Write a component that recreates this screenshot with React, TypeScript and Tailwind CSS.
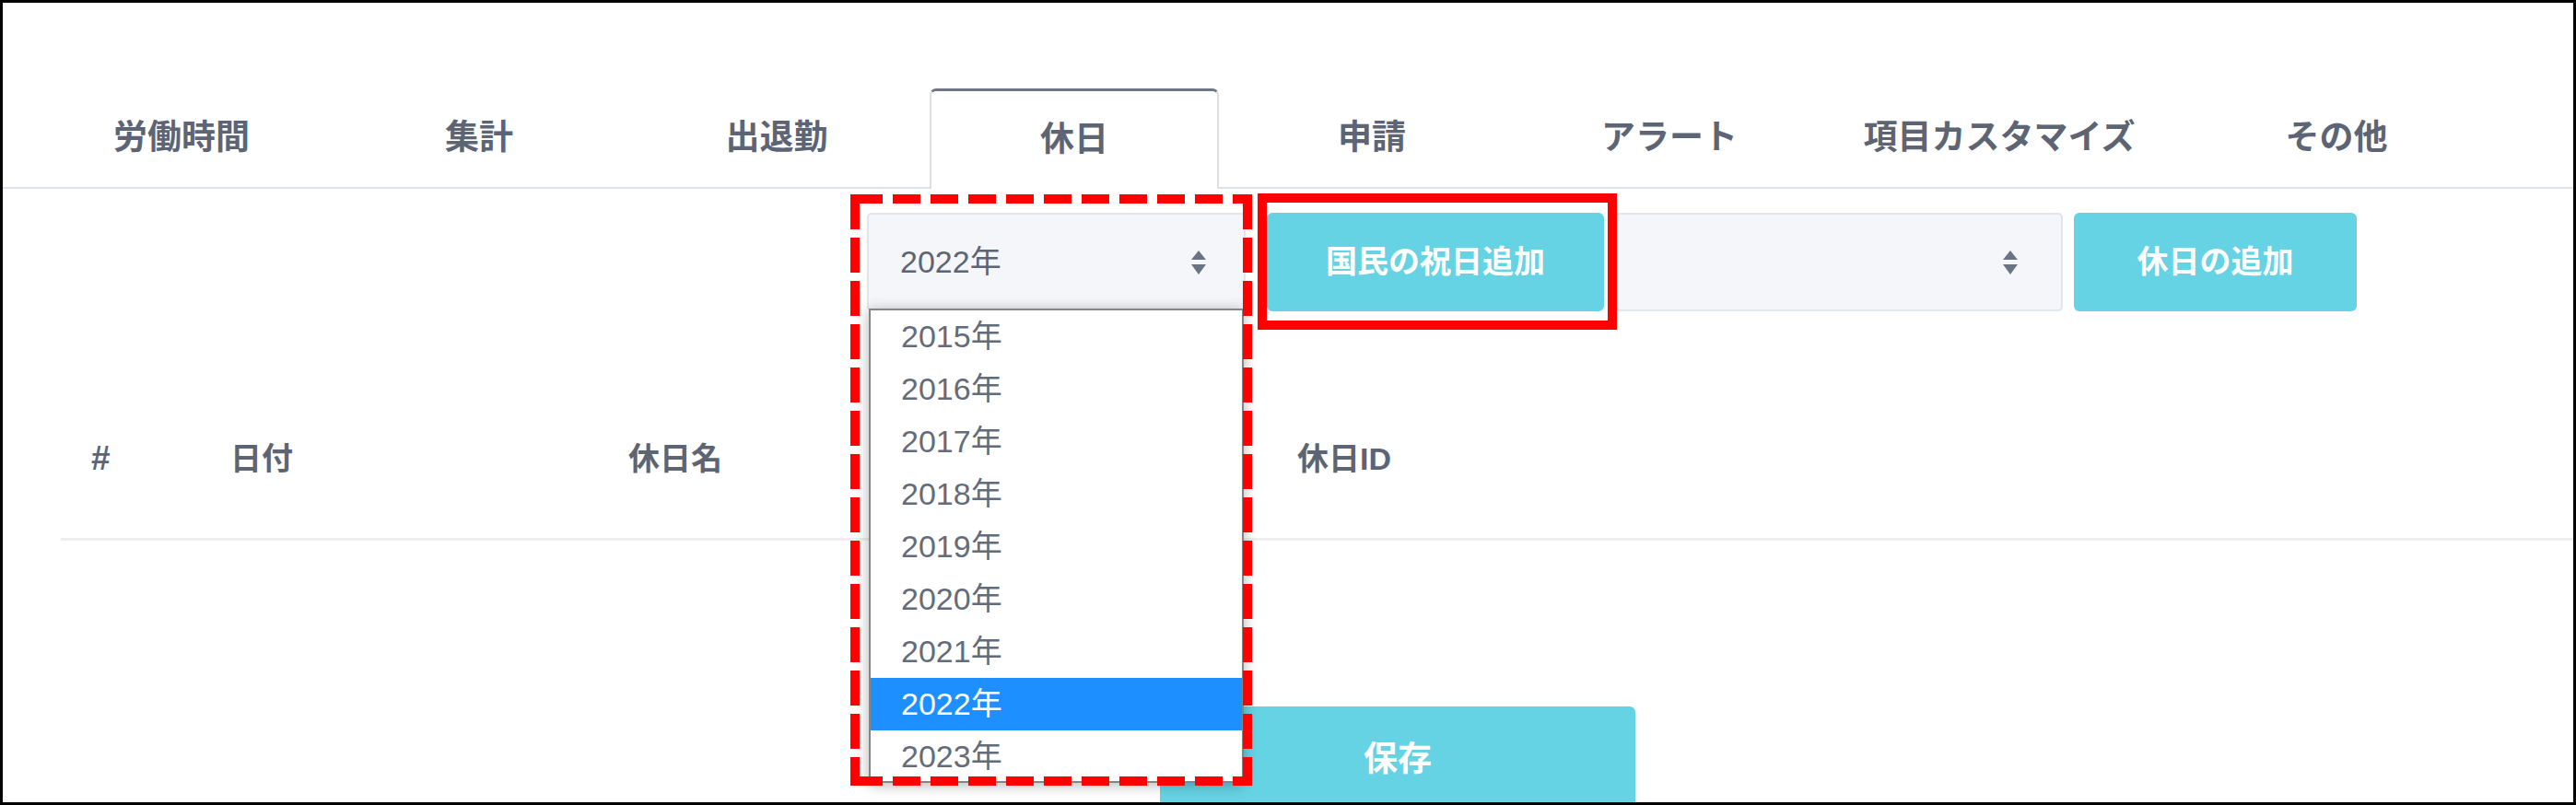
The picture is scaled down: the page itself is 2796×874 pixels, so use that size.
const tabs = [
  { label: "労働時間", w: "w-[314px]" },
  { label: "集計", w: "w-[314px]" },
  { label: "出退勤", w: "w-[314px]" },
  { label: "休日", w: "w-[314px]", active: true },
  { label: "申請", w: "w-[314px]" },
  { label: "アラート", w: "w-[314px]" },
  { label: "項目カスタマイズ", w: "w-[384px]" },
  { label: "その他", w: "w-[330px]" },
];

const years = ["2015年", "2016年", "2017年", "2018年", "2019年", "2020年", "2021年", "2022年", "2023年"];

/* up/down arrows of a select */
function SortArrows() {
  return (
    <svg width="16" height="26" viewBox="0 0 16 26" className="shrink-0">
      <path d="M8 0 L16 10 L0 10 Z" fill="#6b7385" />
      <path d="M0 15 L16 15 L8 26 Z" fill="#6b7385" />
    </svg>
  );
}

/* red dashed marker drawn over the year select */
function DashedMarker() {
  return (
    <svg width="436" height="642" viewBox="0 0 436 642" className="absolute left-[920px] top-[208px]">
      <path d="M0 5 H436" stroke="#ff0000" strokeWidth="10" strokeDasharray="35 11 30 11 30 11 30 11 30 11 30 11 30 11 30 11 30 11 30 11 30 11" />
      <path d="M0 637 H436" stroke="#ff0000" strokeWidth="10" strokeDasharray="35 11 30 11 30 11 30 11 30 11 30 11 30 11 30 11 30 11 30 11 30 11" />
      <path d="M5 0 V642" stroke="#ff0000" strokeWidth="10" strokeDasharray="38 9" />
      <path d="M431 0 V642" stroke="#ff0000" strokeWidth="10" strokeDasharray="38 9" />
    </svg>
  );
}

export default function App() {
  return (
    <div
      className="relative w-[2796px] h-[874px] overflow-hidden border-[3px] border-black bg-white text-[#5d6575]"
      style={{ fontFamily: '"Liberation Sans", "Noto Sans CJK JP", sans-serif' }}
    >
      {/* tabs */}
      <div className="mt-[93px] flex gap-[9px] pl-[37px] border-b-2 border-[#dee2e6]">
        {tabs.map((t) =>
          t.active ? (
            <div
              key={t.label}
              className={`${t.w} h-[109px] -mb-[2px] flex items-center justify-center bg-white rounded-t-[7px] border-2 border-b-0 border-[#dcdfe4] border-t-[3px] border-t-[#6f7787] text-[37px] font-bold`}
            >
              {t.label}
            </div>
          ) : (
            <div key={t.label} className={`${t.w} h-[107px] flex items-center justify-center text-[37px] font-bold`}>
              {t.label}
            </div>
          )
        )}
      </div>

      {/* toolbar */}
      <div className="mt-[26px] flex items-start pl-[938px]">
        <div className="w-[411px] h-[107px] flex items-center justify-between pl-[34px] pr-[41px] bg-[#f5f6fa] border-2 border-[#e1e5ec] rounded-[5px] text-[34px]">
          <span>2022年</span>
          <SortArrows />
        </div>
        <button className="ml-[23px] w-[366px] h-[107px] rounded-[6px] bg-[#66d3e4] text-white text-[34px] font-bold">
          国民の祝日追加
        </button>
        <div className="ml-[12px] w-[486px] h-[107px] flex items-center justify-end pr-[47px] bg-[#f5f6fa] border-2 border-[#e1e5ec] rounded-[5px]">
          <SortArrows />
        </div>
        <button className="ml-[12px] w-[307px] h-[107px] rounded-[6px] bg-[#66d3e4] text-white text-[34px] font-bold">
          休日の追加
        </button>
      </div>

      {/* table header */}
      <div className="mt-[74px] ml-[63px] h-[175px] flex items-center border-b-[3px] border-[#eeeeee] text-[34px] font-bold">
        <div className="w-[184px] pl-[33px] text-[37px]">#</div>
        <div className="w-[432px]">日付</div>
        <div className="w-[726px]">休日名</div>
        <div>休日ID</div>
      </div>

      {/* save */}
      <div className="mt-[180px] pl-[1256px]">
        <button className="w-[516px] h-[116px] rounded-[6px] bg-[#66d3e4] text-white text-[37px] font-bold">保存</button>
      </div>

      {/* open year dropdown */}
      <div className="absolute left-[940px] top-[332px] w-[407px] h-[515px] bg-white border-2 border-[#858585] shadow-[0_2px_14px_rgba(0,0,0,0.3)]">
        {years.map((y) => (
          <div
            key={y}
            className={`h-[57px] flex items-center pl-[33px] text-[34px] ${
              y === "2022年" ? "bg-[#1e8fff] text-white" : "text-[#646c7b]"
            }`}
          >
            {y}
          </div>
        ))}
      </div>

      {/* annotation boxes */}
      <DashedMarker />
      <div className="absolute left-[1362px] top-[207px] w-[390px] h-[148px] border-[10px] border-[#ff0000]" />
    </div>
  );
}
